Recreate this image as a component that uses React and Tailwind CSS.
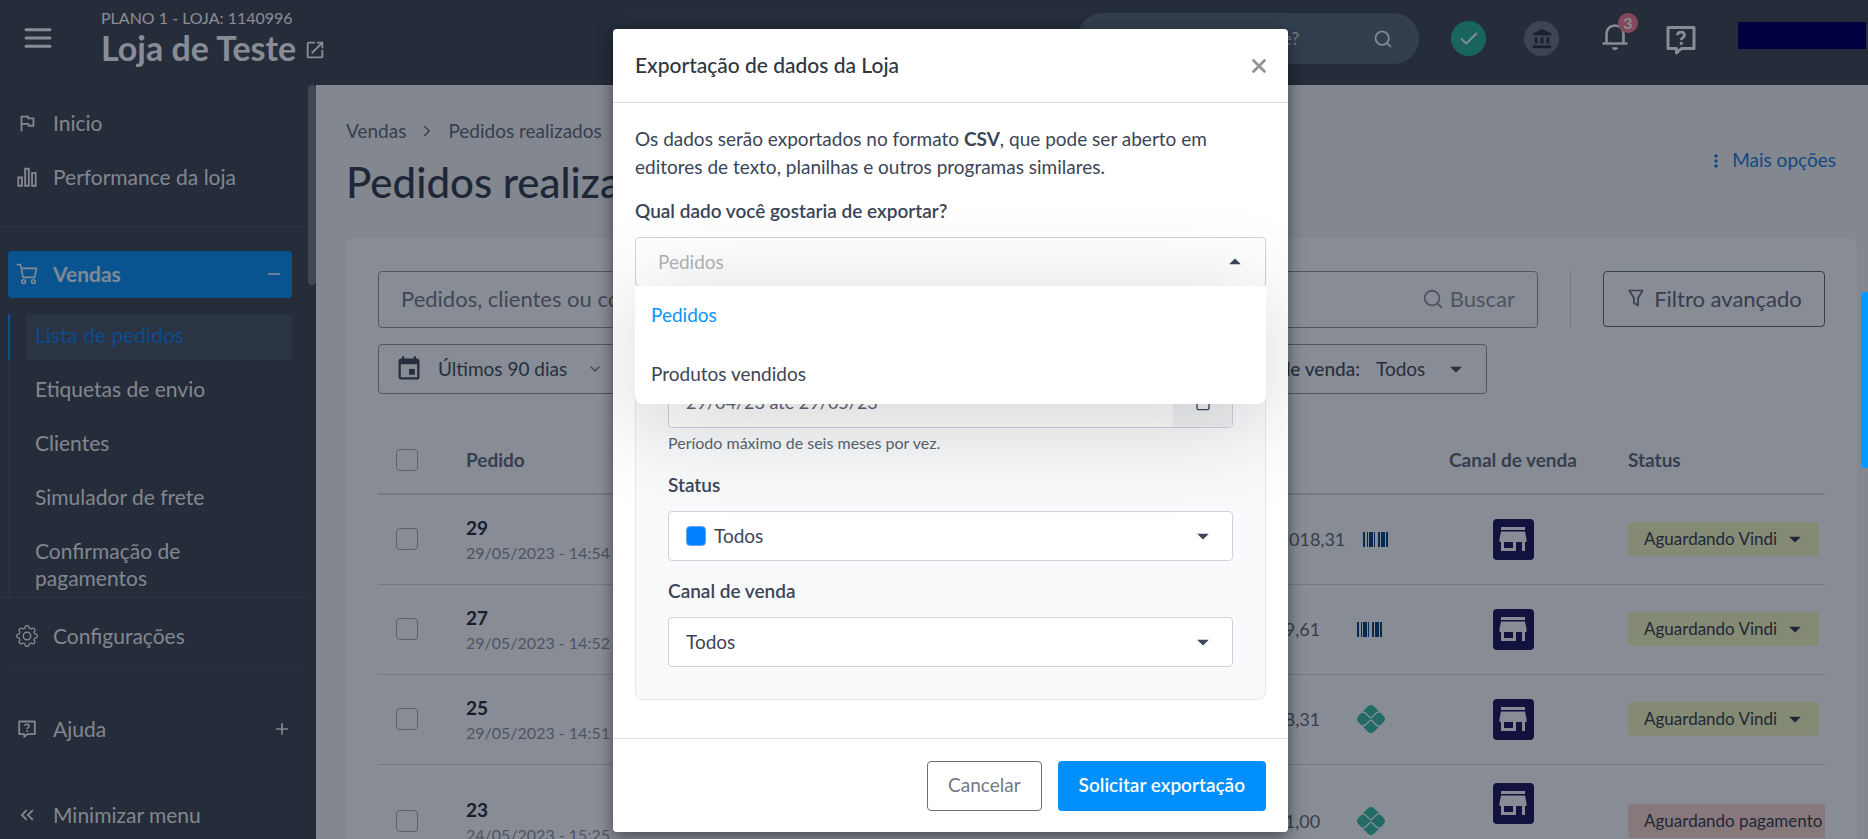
import { MdStore, MdEvent, MdAccountBalance, MdOutlineFlag, MdKeyboardDoubleArrowLeft, MdOpenInNew, MdArrowDropDown, MdMoreVert, MdAdd, MdRemove } from "react-icons/md";
import { BsGear } from "react-icons/bs";
import { FaPix } from "react-icons/fa6";
import { Search, Check, ChevronRight, ChevronDown, Calendar } from "lucide-react";

function MenuIcon() {
  return (
    <svg viewBox="0 0 28 20" className="h-5 w-7" stroke="currentColor" strokeWidth="3" strokeLinecap="round" aria-hidden="true">
      <path d="M2 1.800h24M2 10h24M2 18.200h24" />
    </svg>
  );
}

function CartIcon() {
  return (
    <svg viewBox="0 0 22 22" className="size-[22px]" fill="none" stroke="currentColor" strokeWidth="1.600" strokeLinecap="round" strokeLinejoin="round" aria-hidden="true">
      <path d="M1.200 1.600h3.300l2.600 12.800h11.500L20.600 5.400H5.300" />
      <circle cx="7.600" cy="18.600" r="1.900" />
      <circle cx="17.400" cy="18.600" r="1.900" />
    </svg>
  );
}

function HelpBox({ className }) {
  return (
    <svg viewBox="0 0 30 30" className={className} fill="none" stroke="currentColor" aria-hidden="true">
      <path d="M2 2.500h26v21H15.500l-5 4.500v-4.500H2z" strokeWidth="3" strokeLinejoin="round" />
      <path d="M11.500 10.200c0-4.200 7-4.200 7 0 0 2.500-3.300 2.300-3.300 5" strokeWidth="2.800" />
      <path d="M15.200 17v2.800" strokeWidth="2.900" />
    </svg>
  );
}

function BellIcon() {
  return (
    <svg viewBox="0 0 26 28" className="h-7 w-[26px]" fill="none" stroke="currentColor" strokeLinecap="round" aria-hidden="true">
      <path d="M1.500 20.500h23M4.500 20V11c0-5 3.500-8.500 8.500-8.500s8.500 3.500 8.500 8.500v9" strokeWidth="2.600" />
      <path d="M11 25.200c1 1.300 3 1.300 4 0z" strokeWidth="2" strokeLinejoin="round" />
    </svg>
  );
}

function CloseIcon() {
  return (
    <svg viewBox="0 0 14 14" className="size-[14px]" stroke="currentColor" strokeWidth="2.700" strokeLinecap="round" aria-hidden="true">
      <path d="M1.500 1.500l11 11M12.500 1.500l-11 11" />
    </svg>
  );
}

function Bars({ className }) {
  return (
    <svg viewBox="0 0 24 24" className={className} fill="none" stroke="currentColor" strokeWidth="2" aria-hidden="true">
      <path d="M2.500 12.500h4v9h-4zM10 3h4v18.500h-4zM17.500 7.500h4v14h-4z" />
    </svg>
  );
}

function Funnel({ className }) {
  return (
    <svg viewBox="0 0 24 24" className={className} fill="none" stroke="currentColor" strokeWidth="2" aria-hidden="true">
      <path d="M4 3h16l-5.500 9v9l-5-3v-6z" strokeLinejoin="round" />
    </svg>
  );
}

function Barcode() {
  return (
    <svg viewBox="0 0 25 15" preserveAspectRatio="none" className="h-[15px] w-[25px] text-[#003a76]" fill="currentColor" role="img" aria-label="Boleto">
      <path d="M0 0h2v15H0zM4 0h1v15H4zM6 0h4v15H6zM11 0h1v15h-1zM15 0h2v15h-2zM18 0h4v15h-4zM23 0h2v15h-2z" />
    </svg>
  );
}

const subItems = ["Etiquetas de envio", "Clientes", "Simulador de frete", "Confirmação de pagamentos"];

const orders = [
  { id: "29", date: "29/05/2023 - 14:54", value: "R$ 1.018,31", pay: "boleto", status: "Aguardando Vindi" },
  { id: "27", date: "29/05/2023 - 14:52", value: "R$ 99,61", pay: "boleto", status: "Aguardando Vindi" },
  { id: "25", date: "29/05/2023 - 14:51", value: "R$ 68,31", pay: "pix", status: "Aguardando Vindi" },
  { id: "23", date: "24/05/2023 - 15:25", value: "R$ 71,00", pay: "pix", status: "Aguardando pagamento", late: true },
];

function Header() {
  return (
    <header className="flex h-[85px] shrink-0 items-start bg-[#383f4a] text-white">
      <button aria-label="Abrir menu" className="mt-7 ml-6">
        <MenuIcon />
      </button>
      <div className="mt-[6px] ml-[49px]">
        <p className="text-base leading-6">PLANO 1 - LOJA: 1140996</p>
        <a href="#loja" className="flex items-center gap-2 text-[34px] leading-9 font-bold">
          Loja de Teste <MdOpenInNew className="mt-1 size-[22px]" />
        </a>
      </div>
      <div className="mt-[13px] ml-auto flex h-[51px] w-[342px] items-center rounded-full bg-[#556474] pr-[26px] pl-6">
        <input aria-label="Busca" placeholder="O que você procura hoje?" className="w-[198px] text-right text-[17px] placeholder:text-white/80" />
        <Search className="ml-auto size-5" />
      </div>
      <div className="mt-[21px] ml-8 flex size-[35px] items-center justify-center rounded-full bg-[#20b191]">
        <Check className="size-[22px]" />
      </div>
      <div className="mt-[21px] ml-[38px] flex size-[35px] items-center justify-center rounded-full bg-[#6a6f7d] text-[#1c2438]">
        <MdAccountBalance className="size-[22px]" />
      </div>
      <button aria-label="Notificações" className="relative mt-[23px] ml-[43px]">
        <BellIcon />
        <span className="absolute -top-[10px] left-4 flex size-5 items-center justify-center rounded-full bg-[#f8778b] text-base font-bold">3</span>
      </button>
      <button aria-label="Ajuda" className="mt-[25px] ml-[38px]">
        <HelpBox className="size-[30px]" />
      </button>
      <div className="relative z-20 mt-[22px] mr-[2px] ml-[42px] h-[27px] w-32 bg-[#000040]" />
    </header>
  );
}

function Sidebar() {
  return (
    <aside className="flex w-[316px] shrink-0 items-start bg-[#383f4a] text-[21px] text-white/95">
      <nav className="min-w-0 flex-1">
        <a href="#inicio" className="mt-[11px] flex h-[54px] items-center gap-[15px] pl-4">
          <MdOutlineFlag className="size-[22px]" /> Inicio
        </a>
        <a href="#performance" className="flex h-[54px] items-center gap-[15px] pl-4">
          <Bars className="size-[22px]" /> Performance da loja
        </a>
        <div className="mt-[22px] border-t border-[#44525e]" />
        <a href="#vendas" className="mt-6 mr-4 ml-2 flex h-[47px] items-center gap-[15px] rounded bg-[#008ff6] pr-2 pb-[2px] pl-2 font-bold">
          <CartIcon /> Vendas
          <MdRemove className="ml-auto size-5" />
        </a>
        <ul className="mt-4 ml-2 border-l-2 border-[#3e4c58]">
          <li className="mb-[3px] -ml-[2px] border-l-2 border-[#008ff6] pr-4 pl-4">
            <a href="#lista" className="flex h-[46px] items-center rounded bg-[#424f5b] pb-1 pl-[9px] text-[#0a7cf0]">Lista de pedidos</a>
          </li>
          {subItems.map((t) => (
            <li key={t} className="w-[220px] pt-[12px] pb-[15px] pl-[25px] leading-[27px] last:pb-[6px]">
              <a href="#sub">{t}</a>
            </li>
          ))}
        </ul>
        <div className="border-t border-[#44525e]" />
        <a href="#config" className="flex h-[70px] items-center gap-[15px] pt-[6px] pl-4">
          <BsGear className="size-[22px]" /> Configurações
        </a>
        <div className="ml-2 border-t border-[#3e4c58]" />
        <a href="#ajuda" className="mt-[33px] flex h-[54px] items-center gap-[15px] pr-4 pl-4">
          <span className="flex w-[22px] justify-center"><HelpBox className="size-[18px]" /></span> Ajuda
          <MdAdd className="ml-auto size-5" />
        </a>
        <button className="mt-8 flex h-[54px] items-center gap-[15px] pl-4">
          <MdKeyboardDoubleArrowLeft className="size-[22px]" /> Minimizar menu
        </button>
      </nav>
      <div className="h-[200px] w-2 rounded-full bg-[#71747f]" />
    </aside>
  );
}

function Main() {
  return (
    <main className="min-w-0 flex-1 overflow-hidden bg-[#f3f4f7] pr-[11px] pl-[30px] text-[#5b6472]">
      <div className="flex items-center justify-between">
        <div>
          <nav aria-label="Trilha" className="mt-8 flex items-center gap-3 text-[19px] leading-7">
            <a href="#vendas">Vendas</a>
            <ChevronRight className="size-[18px]" />
            <span>Pedidos realizados</span>
          </nav>
          <h1 className="mt-[11px] mb-[29px] text-[42px] leading-[53px] font-medium text-[#2d3545]">Pedidos realizados</h1>
        </div>
        <button className="mr-[21px] flex items-center gap-1.5 pb-[2px] text-[19px] text-[#0f78d8]">
          <MdMoreVert className="size-5" /> Mais opções
        </button>
      </div>
      <section className="rounded-t-lg bg-white px-8 pt-[33px]">
        <div className="flex items-stretch">
          <div className="flex h-[57px] flex-1 items-center rounded border border-[#8e939d] pr-[22px] pb-[2px] pl-[22px] text-[22px]">
            <input aria-label="Busca de pedidos" placeholder="Pedidos, clientes ou código" className="min-w-0 flex-1 placeholder:text-[#6f7683]" />
            <button className="flex items-center gap-1.5 text-[#8a8f9a]">
              <Search className="size-[22px]" /> Buscar
            </button>
          </div>
          <div className="ml-8 border-l border-[#d3d6dc]" />
          <button className="ml-8 flex h-14 w-[222px] items-center justify-center gap-2 rounded border border-[#5b6472] pb-[2px] text-[22px]">
            <Funnel className="size-5" /> Filtro avançado
          </button>
        </div>
        <div className="mt-4 flex justify-between pr-[338px] text-[19px] text-[#3c4454]">
          <button className="flex h-[50px] items-center rounded border border-[#8e939d] pr-[18px] pl-4">
            <MdEvent className="size-7" />
            <span className="ml-[15px]">Últimos 90 dias</span>
            <ChevronDown className="ml-5 size-4 text-[#6f7683]" />
          </button>
          <label className="flex h-[50px] items-center rounded border border-[#8e939d] pr-4 pl-5">
            <span className="font-medium">Canal de venda:</span>
            <select className="ml-4 w-[66px] appearance-none">
              <option>Todos</option>
            </select>
            <MdArrowDropDown className="size-7" />
          </label>
        </div>
        <div className="mt-8 overflow-hidden">
          <table className="w-full table-fixed text-left text-lg">
            <colgroup>
              <col className="w-[88px]" />
              <col className="w-[200px]" />
              <col />
              <col className="w-[182px]" />
              <col className="w-[166px]" />
              <col className="w-[229px]" />
            </colgroup>
            <thead>
              <tr className="h-[68px] border-b-2 border-[#d9dbe4] text-[19px]">
                <th className="pl-[18px]">
                  <input type="checkbox" aria-label="Selecionar todos" className="block size-[22px] appearance-none rounded border border-[#a5a9b4]" />
                </th>
                <th className="font-bold">Pedido</th>
                <th />
                <th />
                <th className="text-center font-bold whitespace-nowrap">Canal de venda</th>
                <th className="pl-8 font-bold">Status</th>
              </tr>
            </thead>
            <tbody>
              {orders.map((o) => (
                <tr key={o.id} className={o.late ? "h-[114px] border-b border-[#d9dbe4]" : "h-[90px] border-b border-[#d9dbe4]"}>
                  <td className="pl-[18px]">
                    <input type="checkbox" aria-label={"Selecionar pedido " + o.id} className="block size-[22px] appearance-none rounded border border-[#a5a9b4]" />
                  </td>
                  <td>
                    <a href="#pedido" className="block text-[19px] leading-[27px] font-bold text-[#1d2433]">{o.id}</a>
                    <span className="block text-base leading-6 whitespace-nowrap text-[#8a8f9a]">{o.date}</span>
                  </td>
                  <td />
                  <td>
                    <div className="flex items-center gap-[18px]">
                      <span className="min-w-[91px]">{o.value}</span>
                      {o.pay === "pix" ? <FaPix className="size-7 text-[#32bda0]" /> : <Barcode />}
                    </div>
                  </td>
                  <td className={o.late ? "pb-9" : ""}>
                    <div className="mx-auto flex size-[41px] items-center justify-center rounded bg-[#100a50] text-white">
                      <MdStore className="size-9" />
                    </div>
                  </td>
                  <td className="pl-8">
                    {o.late ? (
                      <button className="flex h-[34px] items-center rounded bg-[#fcd8cc] px-4 text-[17px] whitespace-nowrap text-[#2d3545]">
                        {o.status} <MdArrowDropDown className="ml-2 size-6" />
                      </button>
                    ) : (
                      <button className="flex h-[34px] w-[191px] items-center justify-between rounded bg-[#f8fbc0] pr-[10px] pl-4 text-[17px] whitespace-nowrap text-[#2d3545]">
                        {o.status} <MdArrowDropDown className="size-7" />
                      </button>
                    )}
                  </td>
                </tr>
              ))}
            </tbody>
          </table>
        </div>
      </section>
    </main>
  );
}

function Modal() {
  return (
    <div role="dialog" aria-label="Exportação de dados da Loja" className="w-[675px] overflow-hidden rounded bg-white text-[19px] leading-7 text-[#3b4556] shadow-[0_4px_16px_rgba(0,0,0,0.5)]">
      <div className="flex h-[74px] items-center justify-between border-b border-[#dcdde5] px-[22px]">
        <h2 className="pb-[2px] text-[21px] font-medium text-[#2f3640]">Exportação de dados da Loja</h2>
        <button aria-label="Fechar" className="text-[#8f9296]">
          <CloseIcon />
        </button>
      </div>
      <div className="px-[22px] pt-[22px] pb-[38px]">
        <p>
          Os dados serão exportados no formato <strong className="font-bold">CSV</strong>, que pode ser aberto em editores de texto, planilhas e outros programas similares.
        </p>
        <label htmlFor="dado" className="mt-4 mb-3 block font-semibold">Qual dado você gostaria de exportar?</label>
        <div className="relative">
          <button id="dado" className="flex h-[50px] w-full items-center justify-between rounded border border-[#cfd3da] bg-white pr-4 pl-[22px] text-[#b3b5b8]">
            Pedidos
            <MdArrowDropDown className="size-7 rotate-180 text-[#3b4556]" />
          </button>
          <ul role="listbox" className="absolute inset-x-0 top-[49px] z-10 rounded-b-lg bg-white shadow-[0_16px_100px_rgba(0,0,0,0.18)]">
            <li role="option" aria-selected="true" className="flex h-[59px] items-center px-4 pb-[2px] text-[#0c94fa]">Pedidos</li>
            <li role="option" aria-selected="false" className="flex h-[59px] items-center px-4 pb-[2px]">Produtos vendidos</li>
          </ul>
        </div>
        <div className="mt-6 rounded-lg border border-[#e6e8ec] bg-[#f8fafc] px-8 pb-8">
          <label htmlFor="periodo" className="mt-[26px] mb-3 block font-semibold">Período</label>
          <div className="flex h-[50px] items-stretch rounded border border-[#cfd3da]">
            <input id="periodo" defaultValue="29/04/23 até 29/05/23" className="min-w-0 flex-1 rounded bg-white px-[17px] pb-[2px] text-lg text-[#5b6472]" />
            <span className="flex w-[59px] items-center justify-center bg-[#f0f2f5]">
              <Calendar className="size-4" />
            </span>
          </div>
          <p className="mt-[3px] mb-[3px] text-base leading-6 text-[#5b6472]">Período máximo de seis meses por vez.</p>
          <label htmlFor="status" className="mt-4 mb-3 block font-semibold">Status</label>
          <div className="flex h-[50px] items-center rounded border border-[#cfd3da] bg-white pr-[15px] pl-[17px]">
            <span className="mr-2 size-5 rounded border border-[#5ba6ea] bg-[#0080ff]" />
            <select id="status" className="h-full flex-1 appearance-none">
              <option>Todos</option>
            </select>
            <MdArrowDropDown className="size-7" />
          </div>
          <label htmlFor="canal" className="mt-4 mb-3 block font-semibold">Canal de venda</label>
          <div className="flex h-[50px] items-center rounded border border-[#cfd3da] bg-white pr-[15px] pl-[17px]">
            <select id="canal" className="h-full flex-1 appearance-none">
              <option>Todos</option>
            </select>
            <MdArrowDropDown className="size-7" />
          </div>
        </div>
      </div>
      <div className="flex justify-end gap-4 border-t border-[#dcdde5] px-[22px] pt-[22px] pb-[21px]">
        <button className="h-[50px] rounded border border-[#697080] px-5 pb-[2px] text-[#737885]">Cancelar</button>
        <button className="h-[50px] rounded bg-[#008ffb] px-[21px] pb-[2px] font-semibold text-white">Solicitar exportação</button>
      </div>
    </div>
  );
}

export default function App() {
  return (
    <div className="relative flex h-screen flex-col overflow-hidden font-['Lato',sans-serif]">
      <Header />
      <div className="flex min-h-0 flex-1">
        <Sidebar />
        <Main />
      </div>
      <div className="absolute inset-0 z-10 bg-[rgba(18,25,42,0.5)]" />
      <div className="absolute inset-x-0 top-[29px] z-30 flex justify-center pl-[33px]">
        <Modal />
      </div>
      <div className="absolute top-[292px] right-0 z-20 h-44 w-[7px] rounded-l bg-[#0099ff]" />
    </div>
  );
}
